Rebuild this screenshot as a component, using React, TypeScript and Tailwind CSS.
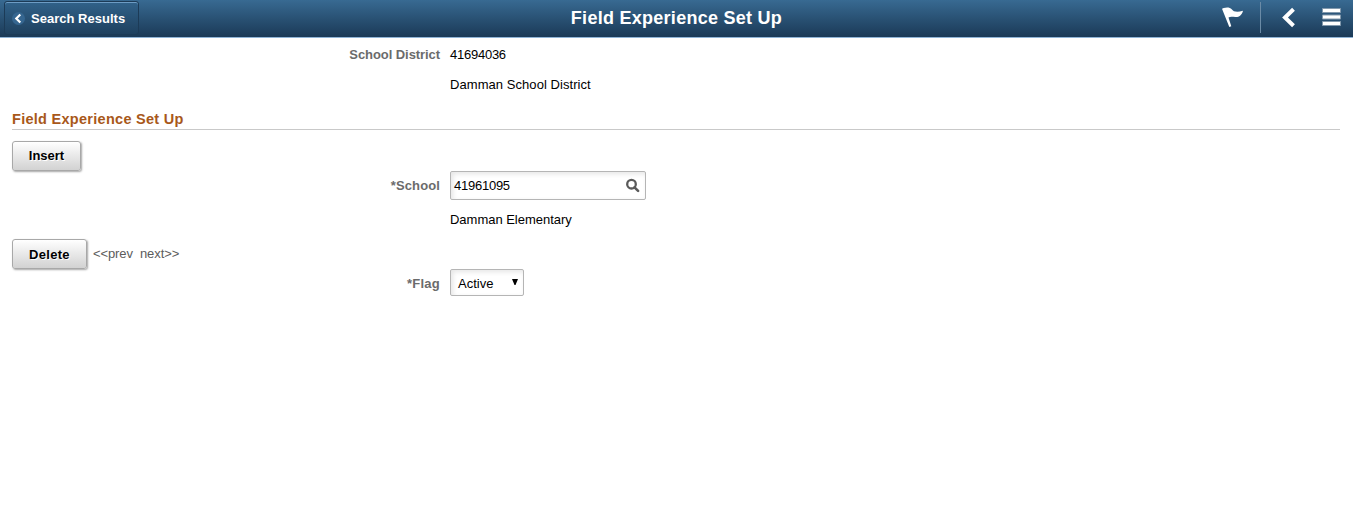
import type { ReactNode } from "react";

function Button({ children, className }: { children: ReactNode; className: string }) {
  return (
    <button
      type="button"
      className={`h-[30px] shrink-0 rounded-[3px] border border-[#a8a8a8] bg-linear-to-b from-white to-[#d2d2d2] bg-clip-padding text-center text-[13px] leading-[28px] font-bold whitespace-nowrap text-black shadow-[1px_1px_2px_rgba(0,0,0,0.35)] [text-shadow:1px_1px_0_#fff] ${className}`}
    >
      {children}
    </button>
  );
}

function Label({ children, className = "" }: { children: ReactNode; className?: string }) {
  return (
    <span
      className={`w-[440px] shrink-0 text-right font-bold whitespace-nowrap text-[#6b6b6b] ${className}`}
    >
      {children}
    </span>
  );
}

function Header() {
  return (
    <header className="grid h-[38px] grid-cols-[1fr_auto_1fr] border-b border-[#8fb4d6] bg-linear-to-b from-[#386a92] to-[#1b3a57] bg-clip-padding text-white">
      <div className="pt-px pl-[4px]">
        <button
          type="button"
          className="flex h-[34px] w-[135px] items-center rounded-[3px] border border-[#1c3b57] bg-linear-to-b from-[#31628a] to-[#1f415f] bg-clip-padding pl-[7px] shadow-[inset_0_1px_0_#6d9cc4]"
        >
          <svg width="13" height="13" viewBox="0 0 13 13" className="mt-px shrink-0">
            <circle cx="6.5" cy="6.5" r="6.5" fill="#356690" />
            <path d="M8.3 2.500 4.300 6.500l4 4" fill="none" stroke="#fff" strokeWidth="2.200" />
          </svg>
          <span className="mt-[2px] ml-[6px] text-[13px] leading-[16px] font-bold tracking-[0.02px] whitespace-nowrap">
            Search Results
          </span>
        </button>
      </div>
      <h1 className="text-[18px] leading-[36px] font-bold tracking-[0.27px] whitespace-nowrap">
        Field Experience Set Up
      </h1>
      <div className="flex justify-end pr-[12px]">
        <svg width="23" height="21" viewBox="0 0 23 21" className="mt-[7px] mr-[15px]">
          <path
            d="M0 1.800 1.700 1C4.500 0 8 .1 9.700 2.200 11.500 5 15.500 5.300 21 3.800 20 8 17 10.300 13.500 10.100 10.500 10 8.500 9.400 6.500 10.500L9.300 19.200 7.300 20Z"
            fill="#fff"
          />
        </svg>
        <div className="mt-[2px] h-[31px] w-px bg-[#6b8ba6]" />
        <svg width="16" height="21" viewBox="0 0 16 21" className="mt-[7px] ml-[20px]">
          <path d="M12.500 2.300 4 10.500l8.500 8.300" fill="none" stroke="#fff" strokeWidth="4" />
        </svg>
        <svg width="19" height="18" viewBox="0 0 19 18" className="mt-[8px] ml-[25px]">
          <path
            d="M.5.5h18v4H.5zM.5 7h18v4H.5zM.5 13.500h18v4H.5z"
            fill="#fff"
            stroke="#8299ad"
            strokeWidth="1"
          />
        </svg>
      </div>
    </header>
  );
}

export default function App() {
  return (
    <div className="h-[515px] overflow-hidden bg-white font-['Liberation_Sans',Arial,sans-serif] text-[13px] leading-[16px] text-black">
      <Header />
      <main>
        <div className="mt-[9px] flex gap-[10px]">
          <Label className="tracking-[-0.07px]">School District</Label>
          <span className="tracking-[-0.25px]">41694036</span>
        </div>
        <p className="mt-[14px] ml-[450px] tracking-[0.06px]">Damman School District</p>
        <h2 className="mt-[17px] mr-[13px] ml-[12px] h-[20px] border-b border-[#c9c9c9] text-[14.5px] leading-[18px] font-bold tracking-[0.28px] text-[#a8581a]">
          Field Experience Set Up
        </h2>
        <div className="mt-[11px] ml-[12px] flex">
          <Button className="w-[69px]">Insert</Button>
        </div>
        <div className="flex items-center gap-[10px]">
          <Label className="tracking-[0.12px]">*School</Label>
          <div className="flex h-[29px] w-[196px] items-center justify-between rounded-[2px] border border-[#b5b5b5] pr-[5px] pl-[3px] shadow-[inset_2px_2px_5px_rgba(0,0,0,0.1)]">
            <span className="tracking-[-0.25px]">41961095</span>
            <svg width="15" height="15" viewBox="0 0 15 15" className="mb-px">
              <circle cx="6.500" cy="6.200" r="4.300" fill="none" stroke="#5a5a5a" strokeWidth="2.300" />
              <path d="m9.500 9.300 3.600 3.600" stroke="#5a5a5a" strokeWidth="2.600" strokeLinecap="round" />
            </svg>
          </div>
        </div>
        <p className="mt-[12px] ml-[450px] tracking-[-0.02px]">Damman Elementary</p>
        <div className="mt-[11px] ml-[12px] flex items-center">
          <Button className="w-[75px] pt-px tracking-[0.3px]">Delete</Button>
          <span className="ml-[6px] tracking-[-0.1px] text-[#5c5c5c]">&lt;&lt;prev</span>
          <span className="ml-[7px] tracking-[-0.05px] text-[#5c5c5c]">next&gt;&gt;</span>
        </div>
        <div className="flex items-center gap-[10px]">
          <Label className="mt-[3px] tracking-[0.25px]">*Flag</Label>
          <div className="flex h-[27px] w-[74px] items-center justify-between rounded-[2px] border border-[#b5b5b5] pr-[4px] pl-[7px] shadow-[inset_2px_2px_5px_rgba(0,0,0,0.1)]">
            <span className="mt-[2px]">Active</span>
            <svg width="8" height="8" viewBox="0 0 8 8" className="mb-[2px]">
              <path d="M1 1h6L4.500 7h-1Z" fill="#000" />
            </svg>
          </div>
        </div>
      </main>
    </div>
  );
}
